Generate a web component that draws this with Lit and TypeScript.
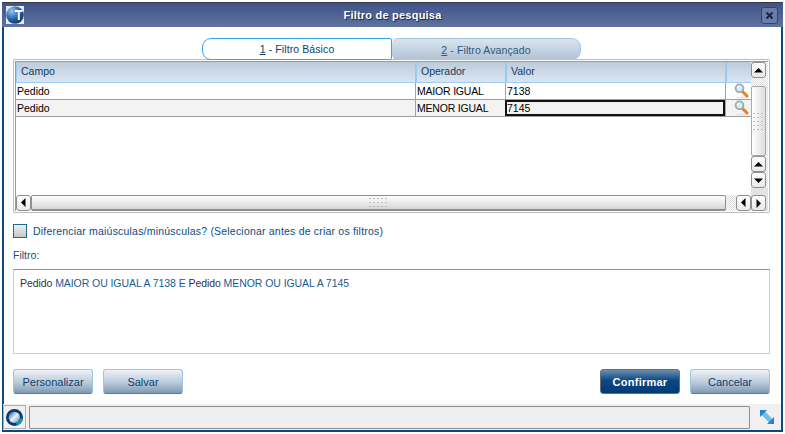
import { LitElement, html, css, svg } from "lit";
import { customElement } from "lit/decorators.js";

const tri = (d: string) => svg`<svg width="9" height="9" viewBox="0 0 9 9"><path d="${d}" fill="#000"/></svg>`;
const UP = "M4.5 2L9 6.5H0z";
const DOWN = "M0 2.5H9L4.5 7z";
const LEFT = "M2 4.5L6.5 0V9z";
const RIGHT = "M2.5 0L7 4.5L2.5 9z";

const lens = svg`<svg class="lens" width="15" height="16" viewBox="0 0 15 16">
  <ellipse cx="8" cy="14.5" rx="6" ry="1" fill="#e6e6e6"/>
  <path d="M8 8L13 13" stroke="#e8802a" stroke-width="3" stroke-linecap="round"/>
  <circle cx="5.5" cy="5.3" r="3.9" fill="#d8eef6" stroke="#a3a8ab" stroke-width="1.8"/>
  <path d="M3.4 5A2.4 2.4 0 0 1 5.5 3" fill="none" stroke="#fff" stroke-width="1.2"/>
</svg>`;

const grip = (w: number, h: number) => svg`<svg width="${w}" height="${h}"><defs><pattern id="g${w}" width="4" height="4" patternUnits="userSpaceOnUse"><rect width="2" height="1" fill="#bdbdbd"/></pattern></defs><rect width="${w}" height="${h}" fill="url(#g${w})"/></svg>`;

@customElement("app-root")
export class AppRoot extends LitElement {
  static styles = css`
    :host { display: block; width: 785px; height: 434px; background: #fff; font-family: "Liberation Sans", Arial, sans-serif; font-size: 11px; color: #000; padding: 2px; box-sizing: border-box; }
    .win { height: 430px; width: 781px; border-top: 1px solid #39393f; border-left: 2px solid #0d4a7c; border-right: 2px solid #0d4a7c; border-bottom: 2px solid #0d4a7c; box-sizing: border-box; display: flex; flex-direction: column; position: relative; background: #fff; }
    .title { height: 24px; flex: none; margin: 0 -2px; background: linear-gradient(#3f5389, #5f73a0); display: flex; align-items: center; justify-content: center; position: relative; color: #fff; font-weight: bold; font-size: 11px; letter-spacing: .22px; text-shadow: 1px 1px 1px #1c2340; }
    .logo { position: absolute; left: 4px; top: 3px; width: 18px; height: 18px; line-height: 0; }
    .close { position: absolute; right: 5px; top: 4px; width: 17px; height: 17px; box-sizing: border-box; border: 1px solid #33456f; border-radius: 3px; background: #6a7ca8; display: flex; align-items: center; justify-content: center; }
    .body { flex: 1; display: flex; flex-direction: column; padding: 11px 9px 0 9px; min-height: 0; }
    .tabs { display: flex; justify-content: center; height: 22px; flex: none; position: relative; z-index: 1; padding-right: 2px; }
    .tab { width: 190px; height: 22px; box-sizing: border-box; border: 1px solid #34a6ee; border-radius: 9px 2px 2px 9px; background: #fff; display: flex; align-items: center; justify-content: center; color: #0b3e6a; font-size: 10.5px; letter-spacing: .1px; }
    .tab.b { border: 1px solid #a3c8e6; border-radius: 6px 9px 9px 6px; background: linear-gradient(#dbe4ee, #b1c3d5); width: 189px; border-left: none; color: #2b5a82; padding-top: 1px; }
    u { text-decoration: underline; }
    .grid-frame { height: 154px; flex: none; border: 1px solid #bcbcbc; border-radius: 2px; padding: 1px; margin-top: -1px; box-sizing: border-box; position: relative; width: 757px; }
    .grid-inner { display: grid; grid-template-columns: 1fr 17px; grid-template-rows: 1fr 17px; height: 100%; border-left: 1px solid #9a9a9a; border-top: 1px solid #9a9a9a; box-sizing: border-box; }
    .table { min-width: 0; overflow: hidden; }
    .row { display: grid; grid-template-columns: 399px 90px 220px 1fr; height: 17px; box-sizing: border-box; border-bottom: 1px solid #9e9e9e; }
    .row > div { line-height: 16px; padding-left: 1px; white-space: nowrap; overflow: hidden; font-size: 10.5px; }
    .row > div + div { border-left: 1px solid #a2a2a2; }
    .row > .up { letter-spacing: -.2px; }
    .row.alt { background: #f3f3f3; }
    .head { height: 21px; background: linear-gradient(#bccbdc, #dbe5f0); border-bottom: 1px solid #9ccdf5; border-left: 1px solid #9ccdf5; }
    .row.head { grid-template-columns: 398px 90px 220px 1fr; }
    .row.head > div { line-height: 19px; padding-left: 4px; color: #123a5e; font-size: 10.5px; }
    .row.head > div + div { border-left: 2px solid #97cbf5; }
    .cell-sel { outline: 2px solid #111; outline-offset: -2px; }
    .row > .ic { padding: 0 0 0 8px; line-height: 0; }
    .vbar { display: flex; flex-direction: column; grid-row: 1 / 3; grid-column: 2; background: repeating-conic-gradient(#dcdcdc 0 25%, #fff 0 50%) 0 0/2px 2px; }
    .btn { box-sizing: border-box; width: 15px; height: 16px; background: linear-gradient(#fff, #e9e9e9); border: 1px solid #8e8e8e; border-radius: 3px; display: flex; align-items: center; justify-content: center; flex: none; }
    .thumb { box-sizing: border-box; width: 15px; height: 70px; margin-top: 8px; background: linear-gradient(90deg, #fff, #dedede); border: 1px solid #a9a9a9; border-radius: 2px; display: flex; justify-content: center; padding-top: 26px; flex: none; }
    .end { flex: 1; background: #e3e3e3; padding-top: 7px; }
    .hbar { display: flex; align-items: center; height: 17px; grid-row: 2; grid-column: 1; }
    .hthumb { flex: 1; height: 16px; box-sizing: border-box; background: linear-gradient(#fff, #d6d6d6); border: 1px solid #8e8e8e; border-bottom-width: 2px; border-radius: 2px; display: flex; justify-content: center; padding-top: 2px; }
    .dith { width: 10px; height: 16px; background: repeating-conic-gradient(#dcdcdc 0 25%, #fff 0 50%) 0 0/2px 2px; }
    .check { display: flex; align-items: center; gap: 6px; margin-top: 11px; height: 14px; color: #0c4c84; font-size: 10.5px; flex: none; letter-spacing: .2px; }
    .box { width: 14px; height: 14px; box-sizing: border-box; border: 1px solid #1d6a94; background: linear-gradient(#efefef, #c6c6c6); }
    .flabel { margin-top: 10px; height: 14px; line-height: 14px; color: #1d4f7c; font-size: 10.5px; flex: none; }
    .filter { margin-top: 7px; height: 85px; width: 757px; flex: none; box-sizing: border-box; border: 1px solid #afd6f4; border-top-color: #7796b4; padding: 7px 6px; font-size: 10.5px; letter-spacing: -.07px; color: #333; }
    .filter b { font-weight: normal; color: #1a5c92; }
    .actions { display: flex; justify-content: space-between; width: 757px; margin-top: 15px; flex: none; }
    .group { display: flex; gap: 10px; }
    .act { width: 80px; height: 25px; box-sizing: border-box; border: 1px solid #9ec5e6; border-bottom-color: #557a9c; border-radius: 3px; background: linear-gradient(#eef3f8, #b9c9d9 55%, #7e9ab6); color: #0e3f6c; font-size: 11px; display: flex; align-items: center; justify-content: center; }
    .act.primary { border: 1px solid #666f78; background: linear-gradient(#6f8faf, #0b4883 45%, #003a78); color: #fff; font-weight: bold; letter-spacing: .25px; }
    .status { height: 26px; flex: none; margin-left: -1px; background: #f0f0f0; display: flex; align-items: flex-start; gap: 3px; padding-top: 1px; box-sizing: border-box; }
    .sicon { width: 23px; height: 24px; box-sizing: border-box; border: 1px solid #b0b0b0; display: flex; align-items: center; justify-content: center; }
    .sfield { width: 721px; height: 23px; margin-top: 1px; box-sizing: border-box; border: 1px solid #8d8d8d; border-radius: 1px; background: #efefef; }
    .resize { margin: 5px 0 0 7px; line-height: 0; }
  `;

  render() {
    return html`<div class="win">
      <div class="title">
        <div class="logo">
          <svg width="18" height="18" viewBox="0 0 18 18">
            <defs><radialGradient id="sph" cx=".32" cy=".28" r=".85"><stop offset="0" stop-color="#9cc6ee"/><stop offset=".5" stop-color="#2a69b2"/><stop offset="1" stop-color="#072a5c"/></radialGradient></defs>
            <rect width="18" height="18" fill="#e6e9f1"/>
            <circle cx="9" cy="9" r="8.8" fill="url(#sph)"/>
            <path d="M9 5H16.5M12.8 5V14" stroke="#fff" stroke-width="2" fill="none"/>
          </svg>
        </div>
        Filtro de pesquisa
        <div class="close"><svg width="9" height="9" viewBox="0 0 9 9"><path d="M1.5 1.5L7.5 7.5M7.5 1.5L1.5 7.5" stroke="#1c2440" stroke-width="2"/></svg></div>
      </div>
      <div class="body">
        <div class="tabs">
          <div class="tab"><span><u>1</u> - Filtro Básico</span></div>
          <div class="tab b"><span><u>2</u> - Filtro Avançado</span></div>
        </div>
        <div class="grid-frame"><div class="grid-inner">
          <div class="table">
            <div class="row head"><div>Campo</div><div>Operador</div><div>Valor</div><div></div></div>
            <div class="row"><div>Pedido</div><div class="up">MAIOR IGUAL</div><div>7138</div><div class="ic">${lens}</div></div>
            <div class="row alt"><div>Pedido</div><div class="up">MENOR IGUAL</div><div class="cell-sel">7145</div><div class="ic">${lens}</div></div>
          </div>
          <div class="vbar">
            <div class="btn">${tri(UP)}</div>
            <div class="thumb">${grip(11, 20)}</div>
            <div class="btn">${tri(UP)}</div>
            <div class="btn">${tri(DOWN)}</div>
            <div class="end"><div class="btn">${tri(RIGHT)}</div></div>
          </div>
          <div class="hbar">
            <div class="btn">${tri(LEFT)}</div>
            <div class="hthumb">${grip(19, 10)}</div>
            <div class="dith"></div>
            <div class="btn">${tri(LEFT)}</div>
          </div>
        </div></div>
        <div class="check"><div class="box"></div>Diferenciar maiúsculas/minúsculas? (Selecionar antes de criar os filtros)</div>
        <div class="flabel">Filtro:</div>
        <div class="filter">Pedido <b>MAIOR OU IGUAL A 7138 E</b> Pedido <b>MENOR OU IGUAL A 7145</b></div>
        <div class="actions">
          <div class="group"><div class="act">Personalizar</div><div class="act">Salvar</div></div>
          <div class="group"><div class="act primary">Confirmar</div><div class="act">Cancelar</div></div>
        </div>
      </div>
      <div class="status">
        <div class="sicon">
          <svg width="19" height="19" viewBox="0 0 19 19">
            <defs>
              <linearGradient id="sp2" x1="0" y1="0" x2="1" y2="1"><stop offset=".15" stop-color="#4f86bb"/><stop offset=".5" stop-color="#eef3f8"/><stop offset=".85" stop-color="#7fa8cc"/></linearGradient>
            </defs>
            <circle cx="9.5" cy="9.5" r="8.5" fill="#0a3a72"/>
            <path d="M12 17.5A8.5 8.5 0 0 0 17.8 11L15 10A6 6 0 0 1 11 15z" fill="#1798b2"/>
            <circle cx="9.3" cy="9.3" r="5.6" fill="url(#sp2)"/>
          </svg>
        </div>
        <div class="sfield"></div>
        <div class="resize">
          <svg width="14" height="14" viewBox="0 0 14 14">
            <path d="M3 3L11 11" stroke="#74bdea" stroke-width="5"/>
            <path d="M0 0H7L0 7zM14 14H7L14 7z" fill="#1f86cc"/>
          </svg>
        </div>
      </div>
    </div>`;
  }
}
